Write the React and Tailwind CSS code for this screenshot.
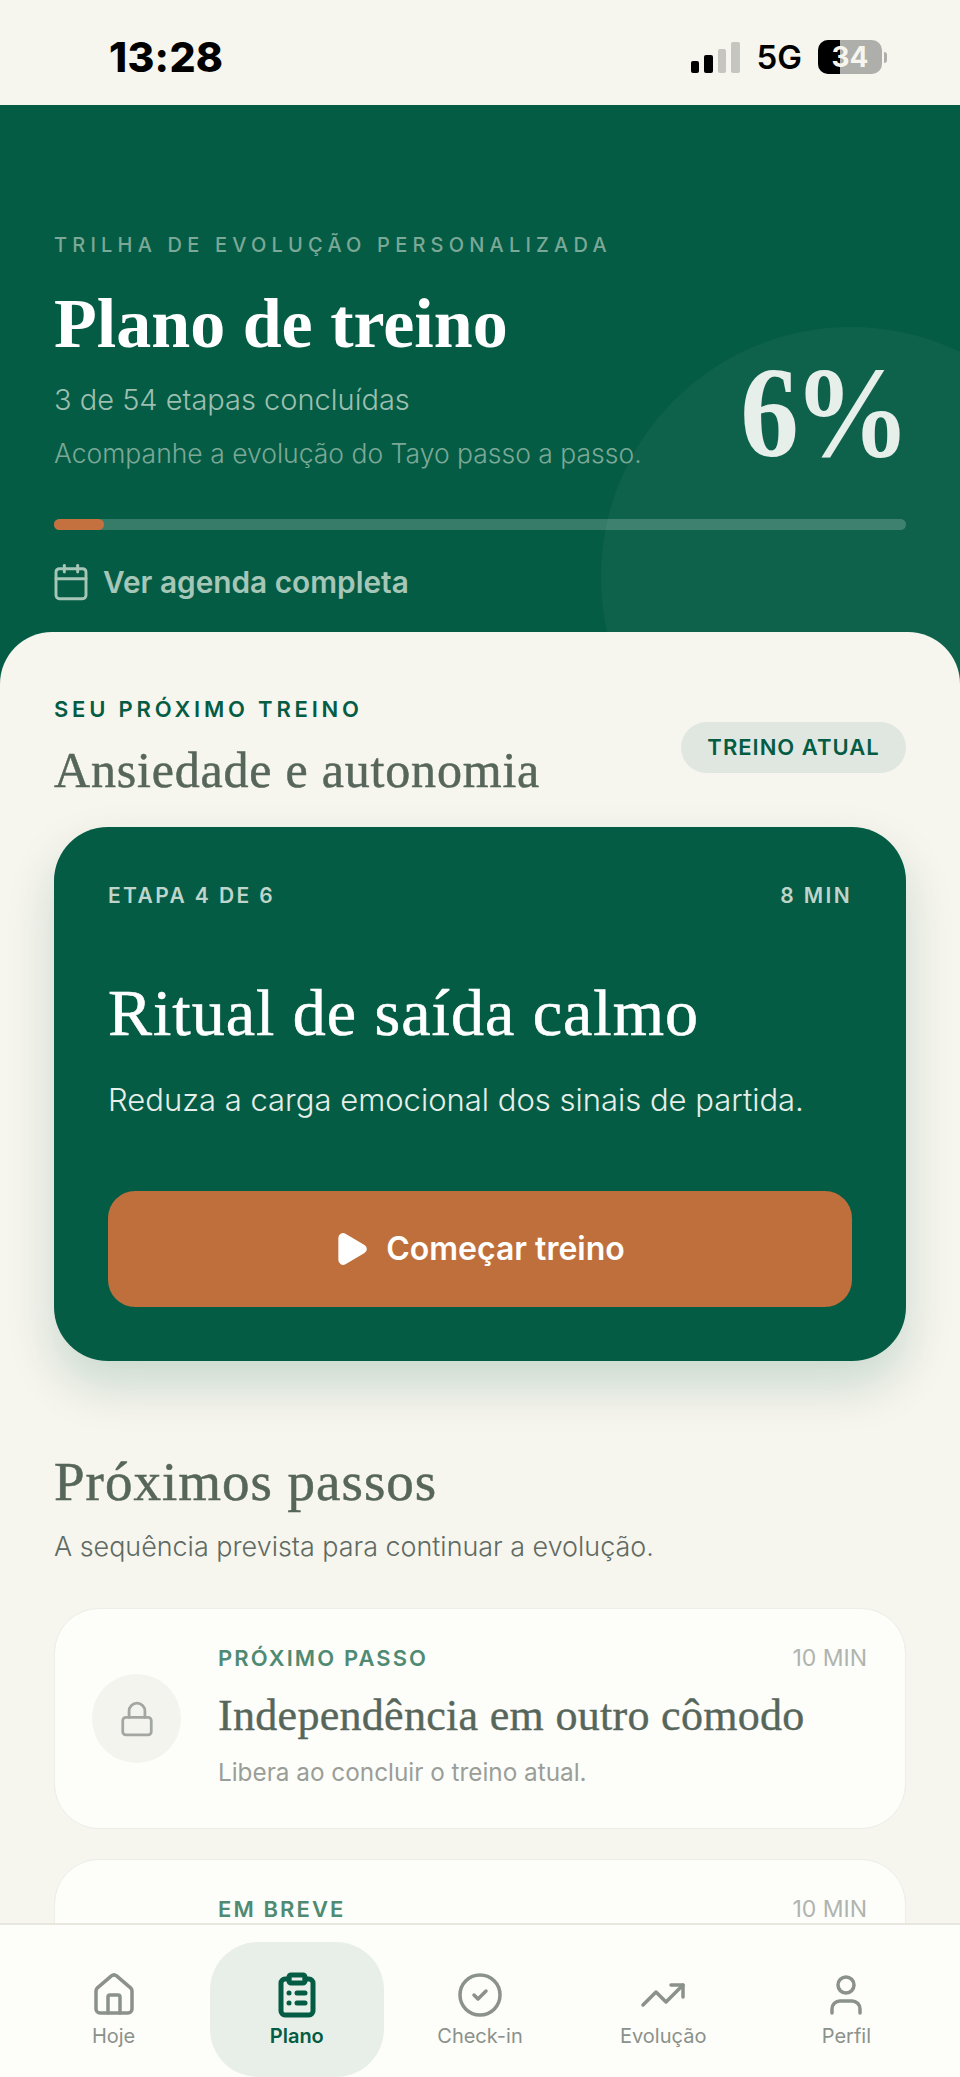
import React from "react";
import { House, ClipboardList, CircleCheck, TrendingUp, User, Lock, Calendar, Play } from "lucide-react";

const serif = "[font-family:'Liberation_Serif',serif]";

// second card runs under the bottom nav, only its top row shows
const steps = [
  { tag: "PRÓXIMO PASSO", title: "Independência em outro cômodo", desc: "Libera ao concluir o treino atual." },
  { tag: "EM BREVE" },
];

const navItems = [
  { label: "Hoje", Icon: House },
  { label: "Plano", Icon: ClipboardList, active: true },
  { label: "Check-in", Icon: CircleCheck },
  { label: "Evolução", Icon: TrendingUp },
  { label: "Perfil", Icon: User },
];

const StatusBar = () => (
  <div className="h-[105px] bg-[#f6f5ee] flex items-center justify-between pl-[109px] pr-[73px] pt-[9px] text-black">
    <span className="text-[41px] leading-none font-extrabold tracking-[0.3px]">13:28</span>
    <div className="flex items-center">
      <div className="flex items-end gap-[5px] h-[31px]">
        <div className="w-[8.5px] h-[12px] rounded-[2px] bg-black"></div>
        <div className="w-[8.5px] h-[18px] rounded-[2px] bg-black"></div>
        <div className="w-[8.5px] h-[24px] rounded-[2px] bg-[#c6c6c1]"></div>
        <div className="w-[8.5px] h-[31px] rounded-[2px] bg-[#c6c6c1]"></div>
      </div>
      <span className="ml-[17px] text-[33px] leading-none font-semibold">5G</span>
      <div className="ml-[16px] relative w-[64px] h-[34px] rounded-[10px] bg-[#aeaeaa] overflow-hidden flex items-center justify-center">
        <div className="absolute left-0 top-0 bottom-0 w-[22px] bg-black"></div>
        <span className="relative text-[28px] leading-none font-bold text-[#f6f5ee]">34</span>
      </div>
      <div className="ml-[2px] w-[3px] h-[11px] rounded-r-full bg-[#aeaeaa]"></div>
    </div>
  </div>
);

const StepCard = ({ step }) => (
  <div className="h-[221px] rounded-[45px] bg-[#fdfdfa] border border-[#eceee8] flex items-center px-[37px] gap-[37px] shrink-0">
    <div className="w-[89px] h-[89px] rounded-full bg-[#f4f4ef] flex items-center justify-center shrink-0">
      <Lock className="w-[38px] h-[38px] text-[#a3a7a1]" strokeWidth={1.75} />
    </div>
    <div className="flex-1 pb-[6px]">
      <div className="flex items-center justify-between pr-[1px]">
        <span className="text-[22px] leading-[28px] font-semibold tracking-[2.1px] text-[#4f8a73]">{step.tag}</span>
        <span className="text-[23px] leading-[28px] text-[#b0b4ae]">10 MIN</span>
      </div>
      <h3 className={`${serif} mt-[19px] h-[50px] text-[44px] leading-[50px] tracking-[0.3px] text-[#57665a] [-webkit-text-stroke:0.4px_#57665a]`}>{step.title}</h3>
      <p className="mt-[16px] h-[30px] text-[24.3px] leading-[30px] text-[#9a9e98]">{step.desc}</p>
    </div>
  </div>
);

const App = () => {
  return (
    <div className="relative w-[960px] h-[2077px] overflow-hidden bg-[#f6f5ee] [font-family:'Inter',sans-serif]">
      <StatusBar />

      {/* Hero */}
      <div className="relative h-[580px] bg-[#055c44] overflow-hidden px-[54px] pt-[128px]">
        <div className="absolute left-[601px] top-[222px] w-[500px] h-[500px] rounded-full bg-white/[0.04]"></div>
        <p className="text-[20px] leading-[24px] font-medium tracking-[5.2px] text-[#7ba897]">TRILHA DE EVOLUÇÃO PERSONALIZADA</p>
        <h1 className={`${serif} mt-[32px] text-[70px] leading-[70px] font-bold text-white`}>Plano de treino</h1>
        <div className="relative flex items-start justify-between">
          <div>
            <p className="mt-[24px] text-[29px] leading-[34px] font-light text-[#9cbfb0]">3 de 54 etapas concluídas</p>
            <p className="mt-[19px] text-[26.5px] leading-[34px] font-light text-[#7ba897]">Acompanhe a evolução do Tayo passo a passo.</p>
          </div>
          <span className={`${serif} mt-[3px] mr-[1px] text-[130px] leading-[100px] font-bold tracking-[-6px] text-[#e6efea] scale-x-[0.9] origin-right`}>6%</span>
        </div>
        <div className="relative mt-[49px] h-[11px] rounded-full bg-white/20">
          <div className="h-full w-[50px] rounded-full bg-[#c4713f]"></div>
        </div>
        <div className="relative mt-[32px] ml-[-3px] flex items-center gap-[12px] text-[#a6c6b8]">
          <Calendar className="w-[40px] h-[40px]" strokeWidth={1.75} />
          <span className="text-[29.8px] leading-[36px] font-semibold">Ver agenda completa</span>
        </div>
      </div>

      {/* Sheet */}
      <div className="relative mt-[-53px] rounded-t-[52px] bg-[#f6f5ee] px-[54px] pt-[63px]">
        <div className="flex items-end justify-between">
          <div>
            <p className="text-[22px] leading-[28px] font-semibold tracking-[3.8px] text-[#055c44]">SEU PRÓXIMO TREINO</p>
            <h2 className={`${serif} mt-[20px] text-[50px] leading-[54px] tracking-[0.8px] text-[#57665a] [-webkit-text-stroke:0.5px_#57665a]`}>Ansiedade e autonomia</h2>
          </div>
          <div className="mb-[24px] h-[51px] w-[225px] rounded-full bg-[#e0e7e1] flex items-center justify-center text-[22px] font-semibold tracking-[1px] text-[#055c44]">TREINO ATUAL</div>
        </div>

        {/* Current workout */}
        <div className="mt-[30px] h-[534px] rounded-[54px] bg-[#055c44] px-[54px] pt-[55px] shadow-[0_24px_48px_rgba(5,92,68,0.18)]">
          <div className="flex items-center justify-between text-[21px] leading-[28px] font-semibold tracking-[2.4px] text-[#bfd4ca]">
            <span>ETAPA 4 DE 6</span>
            <span>8 MIN</span>
          </div>
          <h3 className={`${serif} mt-[67px] text-[66px] leading-[72px] tracking-[1px] text-white [-webkit-text-stroke:0.6px_white]`}>Ritual de saída calmo</h3>
          <p className="mt-[31px] text-[31px] leading-[40px] font-light text-[#e6efea]">Reduza a carga emocional dos sinais de partida.</p>
          <div className="mt-[71px] h-[116px] rounded-[27px] bg-[#bf6f3c] flex items-center justify-center gap-[16px] text-white">
            <Play className="ml-[-3px] w-[38px] h-[38px] fill-white" strokeWidth={2} />
            <span className="text-[32px] font-semibold">Começar treino</span>
          </div>
        </div>

        <h2 className={`${serif} mt-[91px] text-[55px] leading-[60px] tracking-[1px] text-[#57665a] [-webkit-text-stroke:0.5px_#57665a]`}>Próximos passos</h2>
        <p className="mt-[17px] text-[26.9px] leading-[34px] font-light text-[#5f6a62]">A sequência prevista para continuar a evolução.</p>

        <div className="mt-[45px] flex flex-col gap-[30px]">
          {steps.map((step, index) => (
            <StepCard key={index} step={step} />
          ))}
        </div>
      </div>

      {/* Bottom nav */}
      <div className="absolute left-0 right-0 bottom-0 h-[154px] bg-[#fdfdfa] border-t-2 border-[#e7e7df] px-[22px] grid grid-cols-5">
        {navItems.map(({ label, Icon, active }) => (
          <div key={label} className={`mx-[4.5px] mt-[17px] rounded-[48px] flex flex-col items-center pt-[29px] ${active ? "bg-[#e8efe9] text-[#055c44]" : "text-[#8b918b]"}`}>
            <Icon className="w-[48px] h-[48px]" strokeWidth={active ? 2.5 : 1.75} />
            <span className={`mt-[4px] text-[20px] leading-[26px] ${active ? "font-semibold" : ""}`}>{label}</span>
          </div>
        ))}
      </div>
    </div>
  );
};

export default App;
